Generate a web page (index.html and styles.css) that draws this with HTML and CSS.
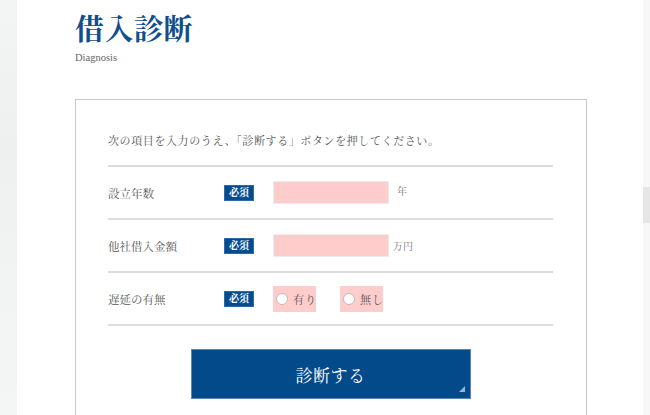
FILE: index.html
```html
<!DOCTYPE html>
<html lang="ja">
<head>
<meta charset="utf-8">
<title>借入診断</title>
<link rel="stylesheet" href="styles.css">
</head>
<body>
<div class="page">
  <div class="side-left"></div>
  <main class="main">
    <h1 class="title">借入診断</h1>
    <p class="subtitle">Diagnosis</p>
    <form class="box">
      <p class="intro">次の項目を入力のうえ、「診断する」ボタンを押してください。</p>
      <div class="row">
        <span class="label">設立年数</span>
        <span class="badge">必須</span>
        <span class="input"></span>
        <span class="unit unit-year">年</span>
      </div>
      <div class="row">
        <span class="label">他社借入金額</span>
        <span class="badge">必須</span>
        <span class="input"></span>
        <span class="unit">万円</span>
      </div>
      <div class="row">
        <span class="label">遅延の有無</span>
        <span class="badge">必須</span>
        <span class="radios">
          <label class="radio"><span class="circle"></span>有り</label>
          <label class="radio"><span class="circle"></span>無し</label>
        </span>
      </div>
      <div class="actions">
        <button type="button" class="submit">診断する<span class="corner"></span></button>
      </div>
    </form>
  </main>
  <div class="side-right"><div class="thumb"></div></div>
</div>
</body>
</html>
```

FILE: styles.css
```css
html, body {
  margin: 0;
  padding: 0;
  background: #fff;
}
body {
  width: 650px;
  height: 415px;
  overflow: hidden;
  font-family: "Liberation Serif", "Noto Serif CJK JP", "Noto Sans CJK JP", serif;
  color: #555;
}
.page {
  display: flex;
  height: 415px;
}
.side-left {
  width: 17px;
  flex: none;
  background: linear-gradient(180deg, #f3f4f4 0%, #eef0f0 35%, #f1f2f2 60%, #f4f5f5 100%);
}
.side-right {
  width: 7px;
  flex: none;
  background: #f7f7f7;
  padding-top: 187px;
  box-sizing: border-box;
}
.thumb {
  height: 36px;
  background: #e6e6e6;
}
.main {
  flex: 1;
  padding-left: 58px;
}
.title {
  margin: 10px 0 0;
  font-size: 29px;
  line-height: 40px;
  font-weight: bold;
  color: #0f4f8e;
  letter-spacing: 0.5px;
}
.subtitle {
  margin: 2px 0 0;
  font-size: 10.5px;
  line-height: 12px;
  color: #666;
}
.box {
  margin-top: 35px;
  width: 512px;
  box-sizing: border-box;
  border: 1px solid #c8c8c8;
  padding: 29px 33px 0 32px;
  height: 330px;
}
.intro {
  margin: 0;
  font-size: 11px;
  letter-spacing: 0.6px;
  line-height: 24px;
  padding-bottom: 12px;
  border-bottom: 2px solid #dcdcdc;
  color: #555;
  white-space: nowrap;
}
.row {
  display: flex;
  align-items: center;
  height: 51px;
  border-bottom: 2px solid #dcdcdc;
  font-size: 11.5px;
}
.label {
  width: 116px;
  flex: none;
  color: #555;
}
.badge {
  flex: none;
  width: 30px;
  height: 16px;
  box-sizing: border-box;
  border: 1px solid #2d6aa8;
  background: #064b8d;
  color: #fff;
  font-size: 10px;
  font-weight: bold;
  line-height: 14px;
  text-align: center;
  margin-top: 1px;
}
.input {
  flex: none;
  margin-left: 19px;
  width: 116px;
  height: 23px;
  box-sizing: border-box;
  border: 1px solid #ececec;
  background: #ffcccc;
}
.unit {
  margin-left: 4px;
  font-size: 10px;
  color: #777;
}
.unit-year {
  margin-left: 8px;
  margin-top: -5px;
}
.radios {
  display: flex;
  gap: 24px;
  margin-left: 19px;
}
.radio {
  display: flex;
  align-items: center;
  width: 43px;
  height: 26px;
  box-sizing: border-box;
  padding-left: 3px;
  background: #ffcccc;
  font-size: 11px;
  letter-spacing: 1px;
  color: #555;
  white-space: nowrap;
  overflow: hidden;
}
.circle {
  flex: none;
  width: 12px;
  height: 12px;
  box-sizing: border-box;
  border: 1px solid #bdbdbd;
  border-radius: 50%;
  background: #fff;
  margin-right: 5px;
}
.actions {
  display: flex;
  justify-content: center;
  padding-top: 23px;
}
.submit {
  position: relative;
  width: 280px;
  height: 50px;
  box-sizing: border-box;
  border: 1px solid #5b86b6;
  background: #034a8b;
  color: #fff;
  font-family: inherit;
  font-size: 17px;
  letter-spacing: 0.5px;
  cursor: pointer;
  padding: 0;
}
.corner {
  position: absolute;
  right: 5px;
  bottom: 6px;
  width: 0;
  height: 0;
  border-left: 6px solid transparent;
  border-bottom: 6px solid #9fb4cc;
}
```
